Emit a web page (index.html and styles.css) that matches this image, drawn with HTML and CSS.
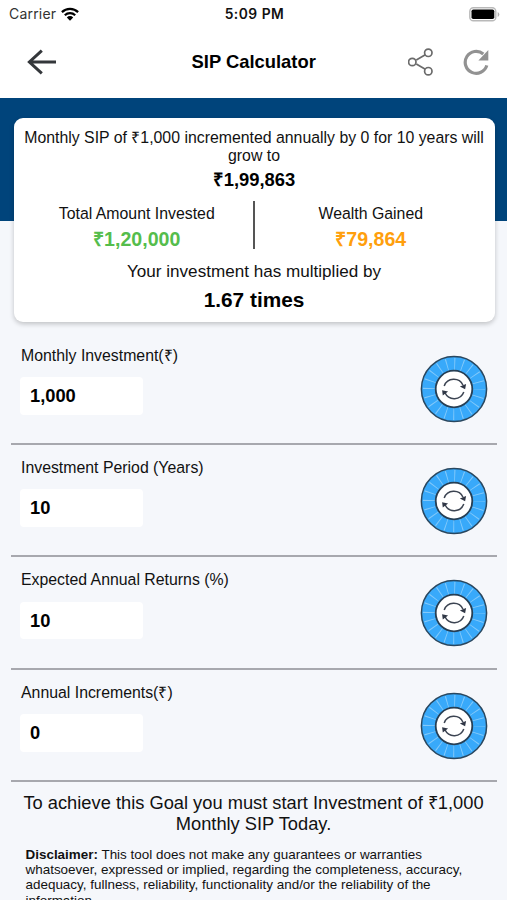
FILE: index.html
```html
<!DOCTYPE html>
<html lang="en">
<head>
<meta charset="utf-8">
<title>SIP Calculator</title>
<link rel="stylesheet" href="styles.css">
</head>
<body>
<svg width="0" height="0" class="defs">
  <defs>
    <g id="dial">
      <circle cx="34" cy="34" r="32.6" fill="#38a9fa" stroke="#29475f" stroke-width="1.5"/>
      <circle cx="34" cy="34" r="25" fill="none" stroke="#83c9fa" stroke-width="12" stroke-dasharray="0.9 6.954" stroke-dashoffset="0.45"/>
      <circle cx="34" cy="34" r="18.3" fill="#fff" stroke="#263f55" stroke-width="1.8"/>
      <path d="M24.2 31A10.2 10.2 0 0 1 43 30.2M43.8 37A10.2 10.2 0 0 1 25 37.8" fill="none" stroke="#3c4452" stroke-width="1.5"/>
      <path fill="#303746" d="M39.9 31.6l6.2-2.6-1 5.2zM28.1 36.6l-6-1.4.7 5.2z"/>
    </g>
  </defs>
</svg>
<div class="status">
  <div class="carrier"><span>Carrier</span>
    <svg width="18" height="14" viewBox="0 0 18 14"><g fill="none" stroke="#000" stroke-width="2.2"><path d="M.9 5.1a11.6 11.6 0 0 1 16.2 0M3.8 8.3a7.5 7.5 0 0 1 10.4 0"/></g><path d="M5.8 10.4a4.6 4.6 0 0 1 6.4 0L9 13.7z"/></svg>
  </div>
  <div class="time">5:09 PM</div>
  <svg class="battery" width="31" height="15" viewBox="0 0 31 15"><rect x=".8" y=".8" width="26" height="13" rx="3.6" fill="#fff" stroke="#b9b9b9" stroke-width="1.4"/><rect x="2.5" y="2.5" width="22.8" height="9.6" rx="1.8"/><path d="M28.7 5v5q1.6-.8 1.6-2.5T28.7 5z" fill="#b0b0b0"/></svg>
</div>
<header class="header">
  <svg class="back" width="30" height="28" viewBox="0 0 30 28"><path d="M29 14H2.4M14.8 2.6L2.4 14l12.4 11.4" fill="none" stroke="#34373b" stroke-width="3"/></svg>
  <h1>SIP Calculator</h1>
  <div class="actions">
    <svg width="28" height="28" viewBox="0 0 28 28"><g fill="none" stroke="#6b6b6b" stroke-width="1.7"><path d="M8.3 12.1l9-5.3M8.3 15.9l9 5.3"/><circle cx="4.3" cy="14" r="3.7"/><circle cx="20.3" cy="4.8" r="3.7"/><circle cx="20.3" cy="23.2" r="3.7"/></g></svg>
    <svg width="28" height="28" viewBox="0 0 28 28"><path d="M20.3 5.9A11 11 0 1 0 23.8 17.4" fill="none" stroke="#929292" stroke-width="3.2"/><path d="M25.3 2v10.4H15.4z" fill="#929292"/></svg>
  </div>
</header>
<main>
  <section class="hero">
    <div class="card">
      <p class="intro">Monthly SIP of ₹1,000 incremented annually by 0 for 10 years will<br>grow to</p>
      <p class="total">₹1,99,863</p>
      <div class="split">
        <div class="stat"><p>Total Amount Invested</p><strong class="green">₹1,20,000</strong></div>
        <div class="divider"></div>
        <div class="stat"><p>Wealth Gained</p><strong class="orange">₹79,864</strong></div>
      </div>
      <p class="multi">Your investment has multiplied by</p>
      <p class="times">1.67 times</p>
    </div>
  </section>
  <section class="fields">
    <div class="row"><div><label>Monthly Investment(₹)</label><div class="input">1,000</div></div><svg width="68" height="68"><use href="#dial"/></svg></div>
    <div class="row"><div><label>Investment Period (Years)</label><div class="input">10</div></div><svg width="68" height="68"><use href="#dial"/></svg></div>
    <div class="row"><div><label>Expected Annual Returns (%)</label><div class="input">10</div></div><svg width="68" height="68"><use href="#dial"/></svg></div>
    <div class="row"><div><label>Annual Increments(₹)</label><div class="input">0</div></div><svg width="68" height="68"><use href="#dial"/></svg></div>
  </section>
  <p class="goal">To achieve this Goal you must start Investment of ₹1,000<br>Monthly SIP Today.</p>
  <p class="disclaimer"><b>Disclaimer:</b> This tool does not make any guarantees or warranties<br>whatsoever, expressed or implied, regarding the completeness, accuracy,<br>adequacy, fullness, reliability, functionality and/or the reliability of the<br>information</p>
</main>
</body>
</html>
```
FILE: styles.css
```css
* { box-sizing: border-box; }
html, body { height: 900px; overflow: hidden; }
body { margin: 0; background: #f5f7fb; color: #111; font-family: "Liberation Sans", Arial, sans-serif; font-size: 15.85px; display: flex; flex-direction: column; }
p, h1 { margin: 0; white-space: nowrap; }
svg { display: block; flex: none; }
.defs { position: absolute; }
.status { height: 28px; flex: none; background: #fff; display: grid; grid-template-columns: 1fr auto 1fr; align-items: center; padding: 0 7px 0 9px; }
.carrier { display: flex; align-items: center; gap: 5px; font: 14px/28px Inter, sans-serif; color: #333; letter-spacing: .2px; }
.time { font: 600 13.8px/28px Inter, sans-serif; letter-spacing: .5px; }
.battery { justify-self: end; }
.header { height: 70px; flex: none; background: #fff; display: grid; grid-template-columns: 164.5px auto 1fr; align-items: center; padding: 0 16px 2px 27px; }
h1 { font-size: 18.4px; line-height: 24px; color: #000; }
.actions { justify-self: end; display: flex; gap: 27.5px; }
.hero { height: 234.5px; padding: 20px 12.5px 0 13.5px; background: linear-gradient(#00447b 0 123px, transparent 123px); }
.card { height: 204px; background: #fff; border-radius: 9px; box-shadow: 0 2px 5px rgba(0,0,0,.22); text-align: center; padding-top: 11px; }
.intro { line-height: 18px; height: 36px; }
.total { height: 29px; line-height: 30px; font-size: 18.4px; font-weight: bold; color: #000; }
.split { display: grid; grid-template: 48px / 1fr 2px 1fr; margin-top: 7px; height: 48px; }
.divider { background: #555; }
.stat { padding: 3px 0 0 7px; }
.stat p { line-height: 20px; }
.stat:last-child { padding: 3px 8px 0 0; }
.stat strong { display: block; font-size: 19.6px; line-height: 31px; }
.green { color: #55bd4c; }
.orange { color: #ff9f0d; }
.multi { font-size: 17.1px; line-height: 22px; margin-top: 12px; }
.times { line-height: 34px; font-size: 20.8px; font-weight: bold; color: #000; }
.fields { padding: 0 10px 0 11px; }
.row { height: 112.4px; border-bottom: 2px solid #a7a8ae; display: flex; justify-content: space-between; padding: 12px 9px 0 9px; }
.row > svg { margin-top: 10px; }
label { display: block; line-height: 21px; margin: 0 0 11.5px 1px; white-space: nowrap; }
.input { width: 123px; height: 37.5px; border-radius: 4px; background: #fff; color: #000; font-weight: bold; font-size: 18.3px; line-height: 38px; padding-left: 10px; }
.goal { text-align: center; font-size: 18.3px; line-height: 21px; padding-top: 10px; }
.disclaimer { font-size: 13.45px; line-height: 15.4px; padding: 12.5px 0 0 25.5px; }
```
